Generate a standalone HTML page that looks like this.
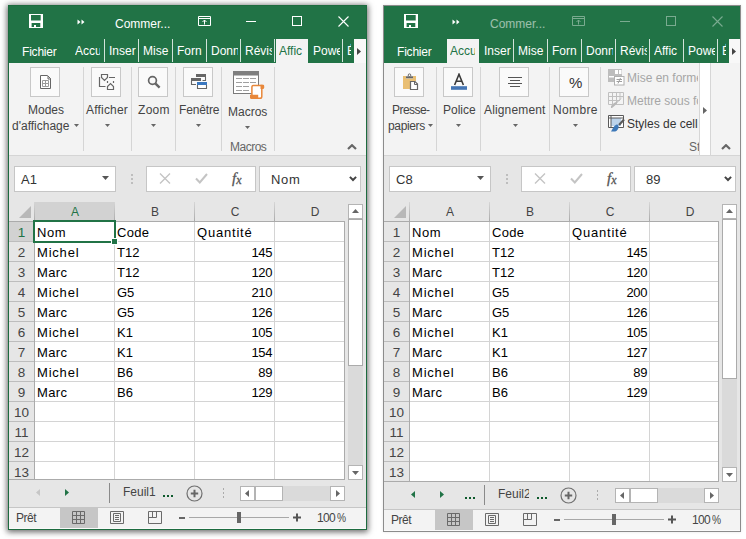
<!DOCTYPE html>
<html><head><meta charset="utf-8"><style>
*{margin:0;padding:0}
html,body{width:746px;height:539px;overflow:hidden;background:#fff;font-family:"Liberation Sans",sans-serif}
.win{position:absolute;box-sizing:border-box;border:1px solid;background:#e6e6e6;overflow:hidden}
.win div,.win svg{position:absolute}
.tb div.ttl{position:absolute}
.ttl{font-size:12px;color:#fff;white-space:nowrap;line-height:14px}
.inactive{opacity:.55}
.inactive.btns{opacity:.4}
.tab{font-size:12px;color:#fff;white-space:nowrap;overflow:hidden;line-height:16px}
.box{background:#fff;border:1px solid #c6c6c6;box-sizing:border-box}
.fb{font-size:13px;color:#333;line-height:16px}
.fx{font:italic 15px "Liberation Serif",serif;color:#555;line-height:18px;-webkit-text-stroke:.3px #555}
.ch{font-size:12px;text-align:center;line-height:16px}
.rh{font-size:13.5px;text-align:center;line-height:16px}
.cell{font-size:13px;color:#000;line-height:16px;white-space:nowrap}
.num{text-align:right;letter-spacing:-.4px}
.sbtn{background:#fff;border:1px solid #b4b4b4;box-sizing:border-box}
.rbox{background:#fafafa;border:1px solid #c8c8c8;box-sizing:border-box}
.rl{font-size:12px;color:#444;white-space:nowrap;line-height:16px}
.sh{font-size:12px;color:#444;white-space:nowrap;overflow:hidden;line-height:16px}
.st{font-size:12px;color:#444;line-height:16px}
</style></head><body>
<div class="win" style="left:8px;top:5px;width:359px;height:525px;border-color:#1d6b3f;box-shadow:0 1px 6px 1px rgba(0,0,0,.6);">
<div style="left:0px;top:0px;width:357px;height:57px;background:#217346"></div>
<div style="left:0px;top:0px;width:357px;height:33px;">
<svg style="left:20px;top:8px;width:14px;height:14px;" viewBox="0 0 14 14"><path fill="#fff" fill-rule="evenodd" d="M0 0H14V14H0Z M2 1H11.7V6.6H2Z M2.6 9H11.3V13H7V11H5V13H2.6Z"/></svg>
<svg style="left:68px;top:13px;width:9px;height:6px;" viewBox="0 0 9 6"><path d="M0.5 0.5L3.5 3L0.5 5.5Z M4.5 0.5L7.5 3L4.5 5.5Z" fill="#fff"/></svg>
<div class="ttl" style="left:106px;top:11px">Commer...</div>
<div class=" btns" style="left:0;top:0;width:357px;height:33px">
<svg style="left:189px;top:10px;width:13px;height:10px;" viewBox="0 0 13 10"><path d="M0.5 0.5H12.5V9.5H0.5Z M0.5 2.5H12.5 M6.5 8.5V4 M4.5 6L6.5 4L8.5 6" fill="none" stroke="#fff" stroke-width="1"/></svg>
<div style="left:237px;top:15px;width:10px;height:1px;background:#fff"></div>
<div style="left:283px;top:10px;width:10px;height:10px;border:1px solid #fff;box-sizing:border-box"></div>
<svg style="left:329px;top:10px;width:11px;height:11px;" viewBox="0 0 11 11"><path d="M0.5 0.5L10.5 10.5M10.5 0.5L0.5 10.5" stroke="#fff" stroke-width="1.1"/></svg>
</div></div>
<div class="tab" style="left:13px;top:38px;letter-spacing:-.2px">Fichier</div>
<div class="tab" style="left:66px;top:37px;width:25px;color:#fff">Accu</div>
<div class="tab" style="left:100px;top:37px;width:27px;color:#fff">Inser</div>
<div class="tab" style="left:134px;top:37px;width:27px;color:#fff">Mise</div>
<div class="tab" style="left:168px;top:37px;width:27px;color:#fff">Forn</div>
<div class="tab" style="left:202px;top:37px;width:27px;color:#fff">Donn</div>
<div class="tab" style="left:236px;top:37px;width:27px;color:#fff">Révis</div>
<div style="left:267px;top:33px;width:32px;height:24px;background:#f3f3f3"></div>
<div class="tab" style="left:270px;top:37px;width:27px;color:#217346">Affic</div>
<div class="tab" style="left:304px;top:37px;width:27px;color:#fff">Powe</div>
<div class="tab" style="left:338px;top:37px;width:4px;color:#fff">É</div>
<div style="left:95px;top:33px;width:1px;height:23px;background:rgba(255,255,255,.8)"></div>
<div style="left:129px;top:33px;width:1px;height:23px;background:rgba(255,255,255,.8)"></div>
<div style="left:163px;top:33px;width:1px;height:23px;background:rgba(255,255,255,.8)"></div>
<div style="left:197px;top:33px;width:1px;height:23px;background:rgba(255,255,255,.8)"></div>
<div style="left:231px;top:33px;width:1px;height:23px;background:rgba(255,255,255,.8)"></div>
<div style="left:265px;top:33px;width:1px;height:23px;background:rgba(255,255,255,.8)"></div>
<div style="left:333px;top:33px;width:1px;height:23px;background:rgba(255,255,255,.8)"></div>
<div style="left:345px;top:33px;width:12px;height:24px;background:#f8f8f8"></div>
<svg style="left:348px;top:42px;width:4px;height:7px;" viewBox="0 0 4 7"><path d="M0 0L4 3.5L0 7Z" fill="#444"/></svg>
<div style="left:0px;top:57px;width:357px;height:92px;background:#f3f3f3"></div>
<div style="left:0px;top:149px;width:357px;height:1px;background:#d5d5d5"></div>
<div class="rbox" style="left:21px;top:61px;width:30px;height:30px;"></div>
<div class="rbox" style="left:82px;top:61px;width:30px;height:30px;"></div>
<div class="rbox" style="left:129px;top:61px;width:30px;height:30px;"></div>
<div class="rbox" style="left:174px;top:61px;width:30px;height:30px;"></div>
<div style="left:74px;top:61px;width:1px;height:84px;background:#d5d5d5"></div>
<div style="left:122px;top:61px;width:1px;height:84px;background:#d5d5d5"></div>
<div style="left:166px;top:61px;width:1px;height:84px;background:#d5d5d5"></div>
<div style="left:212px;top:61px;width:1px;height:84px;background:#d5d5d5"></div>
<div style="left:265px;top:61px;width:1px;height:84px;background:#d5d5d5"></div>
<div class="rl" style="left:19px;top:96px;">Modes</div>
<div class="rl" style="left:3px;top:112px;">d'affichage</div>
<svg style="left:65px;top:118px;width:5px;height:3px;" viewBox="0 0 5 3"><path d="M0 0H5L2.5 3Z" fill="#666"/></svg>
<div class="rl" style="left:77px;top:96px;letter-spacing:.2px">Afficher</div>
<svg style="left:96px;top:118px;width:5px;height:3px;" viewBox="0 0 5 3"><path d="M0 0H5L2.5 3Z" fill="#666"/></svg>
<div class="rl" style="left:129px;top:96px;letter-spacing:.3px">Zoom</div>
<svg style="left:142px;top:118px;width:5px;height:3px;" viewBox="0 0 5 3"><path d="M0 0H5L2.5 3Z" fill="#666"/></svg>
<div class="rl" style="left:170px;top:96px;letter-spacing:-.15px">Fenêtre</div>
<svg style="left:187px;top:118px;width:5px;height:3px;" viewBox="0 0 5 3"><path d="M0 0H5L2.5 3Z" fill="#666"/></svg>
<div class="rl" style="left:219px;top:98px;">Macros</div>
<svg style="left:236px;top:120px;width:5px;height:3px;" viewBox="0 0 5 3"><path d="M0 0H5L2.5 3Z" fill="#666"/></svg>
<div class="rl" style="left:221px;top:133px;color:#666;letter-spacing:-.5px">Macros</div>
<svg style="left:338px;top:138px;width:10px;height:6px;" viewBox="0 0 10 6"><path d="M1 5L5 1.2L9 5" fill="none" stroke="#666" stroke-width="2.2"/></svg>
<svg style="left:30px;top:69px;width:13px;height:15px;" viewBox="0 0 13 15"><path d="M1.5 0.5H8.5L11.5 3.5V13.5H1.5Z" fill="#fff" stroke="#666" stroke-width="1"/><path d="M9 1V4H12" fill="none" stroke="#666"/><path d="M3.5 5.5H9.5V11.5H3.5Z M6.5 5.5V11.5 M3.5 8.5H9.5" fill="none" stroke="#9a9a9a" stroke-width="1"/></svg>
<svg style="left:86px;top:64px;width:22px;height:22px;" viewBox="0 0 22 22"><path d="M4.5 7V16.5H10.5 M6.5 4.5H12.5V7.5L9.5 10.5L6.5 7.5Z M14 7.5H20 M12.5 11V13 M18.5 11V13 M12.5 19.5V16.5L15.5 13.5L18.5 16.5V19.5Z" fill="none" stroke="#666" stroke-width="1.2"/></svg>
<svg style="left:138px;top:69px;width:14px;height:14px;" viewBox="0 0 14 14"><circle cx="5.5" cy="5.5" r="3.9" fill="none" stroke="#666" stroke-width="1.7"/><path d="M8.3 8.3L12.6 12.6" stroke="#666" stroke-width="2.4"/></svg>
<svg style="left:181px;top:67px;width:18px;height:17px;" viewBox="0 0 18 17"><rect x="6" y="1" width="10" height="3" fill="#666"/><path d="M15.5 4V7.5H12.5" fill="none" stroke="#666" stroke-width="1.1"/><rect x="1" y="5" width="10" height="3" fill="#666"/><path d="M1.5 8V11.5H6" fill="none" stroke="#666" stroke-width="1.1"/><rect x="7" y="9" width="10" height="3" fill="#3b78c0"/><path d="M7.5 12V15.5H16.5V12" fill="#fff" stroke="#666" stroke-width="1.1"/></svg>
<svg style="left:223px;top:64px;width:34px;height:30px;" viewBox="0 0 34 30"><rect x="1.5" y="1.5" width="25" height="22" fill="#fff" stroke="#7a7a7a"/><rect x="1" y="1" width="26" height="4.5" fill="#7f7f7f"/><path d="M4 8.5H10M11 8.5H17M18 8.5H24M4 12.5H10M11 12.5H17M18 12.5H24M4 16.5H10M11 16.5H17M4 20.5H10M11 20.5H17" stroke="#a0a0a0" stroke-width="1"/><path d="M21.2 15.5H29.8V26.5Q29.8 28.3 28 28.3H19.9V17.5Q19.9 15.5 21.2 15.5Z" fill="#fff" stroke="#e8873a" stroke-width="1.5"/><path d="M28.5 14.8H31.2Q32.2 14.8 32.2 16V17.5Q32.2 19 30.8 19H28.5Z" fill="#e8873a"/><path d="M18 24.8H26.2V29H19.5Q18 29 18 27.5Z" fill="#e8873a"/></svg>
<div style="left:0px;top:150px;width:357px;height:373px;background:#e6e6e6"></div>
<div class="box" style="left:5px;top:160px;width:102px;height:26px;"></div>
<div class="fb" style="left:12px;top:166px;">A1</div>
<svg style="left:93px;top:170px;width:7px;height:4px;" viewBox="0 0 7 4"><path d="M0 0H7L3.5 4Z" fill="#555"/></svg>
<div style="left:122px;top:168px;width:2px;height:2px;background:#b0b0b0;border-radius:1px"></div>
<div style="left:122px;top:172px;width:2px;height:2px;background:#b0b0b0;border-radius:1px"></div>
<div style="left:122px;top:176px;width:2px;height:2px;background:#b0b0b0;border-radius:1px"></div>
<div class="box" style="left:137px;top:160px;width:110px;height:26px;"></div>
<svg style="left:150px;top:167px;width:12px;height:11px;" viewBox="0 0 12 11"><path d="M1 0.5L11 10.5M11 0.5L1 10.5" stroke="#c4c4c4" stroke-width="1.4"/></svg>
<svg style="left:186px;top:167px;width:13px;height:11px;" viewBox="0 0 13 11"><path d="M1 5.5L4.8 9.5L12 1" fill="none" stroke="#c4c4c4" stroke-width="2"/></svg>
<div class="fx" style="left:223px;top:163px;">f<span style="font-size:12px;position:relative;top:1px;left:0px">x</span></div>
<div class="box" style="left:250px;top:160px;width:102px;height:26px;"></div>
<div class="fb" style="left:262px;top:166px;letter-spacing:0.7px">Nom</div>
<svg style="left:340px;top:170px;width:8px;height:6px;" viewBox="0 0 8 6"><path d="M0.9 0.9L4 4L7.1 0.9" fill="none" stroke="#444" stroke-width="2"/></svg>
<svg style="left:10px;top:200px;width:12px;height:12px;" viewBox="0 0 12 12"><path d="M12 0V12H0Z" fill="#b8b8b8"/></svg>
<div style="left:26px;top:216px;width:309px;height:257px;background:#fff"></div>
<div style="left:26px;top:196px;width:80px;height:19px;background:#d2d2d2"></div>
<div style="left:0px;top:216px;width:25px;height:20px;background:#d2d2d2"></div>
<div style="left:0px;top:215px;width:336px;height:1px;background:#ababab"></div>
<div style="left:25px;top:196px;width:1px;height:19px;background:linear-gradient(#d6d6d6,#ababab)"></div>
<div style="left:105px;top:196px;width:1px;height:19px;background:linear-gradient(#d6d6d6,#ababab)"></div>
<div style="left:185px;top:196px;width:1px;height:19px;background:linear-gradient(#d6d6d6,#ababab)"></div>
<div style="left:265px;top:196px;width:1px;height:19px;background:linear-gradient(#d6d6d6,#ababab)"></div>
<div class="ch" style="left:26px;top:198px;width:80px;color:#217346">A</div>
<div class="ch" style="left:106px;top:198px;width:80px;color:#444">B</div>
<div class="ch" style="left:186px;top:198px;width:80px;color:#444">C</div>
<div class="ch" style="left:266px;top:198px;width:80px;color:#444">D</div>
<div style="left:105px;top:216px;width:1px;height:257px;background:#d4d4d4"></div>
<div style="left:185px;top:216px;width:1px;height:257px;background:#d4d4d4"></div>
<div style="left:265px;top:216px;width:1px;height:257px;background:#d4d4d4"></div>
<div style="left:26px;top:235px;width:309px;height:1px;background:#d4d4d4"></div>
<div style="left:0px;top:235px;width:26px;height:1px;background:#bdbdbd"></div>
<div class="rh" style="left:0px;top:219px;width:25px;color:#217346">1</div>
<div style="left:26px;top:255px;width:309px;height:1px;background:#d4d4d4"></div>
<div style="left:0px;top:255px;width:26px;height:1px;background:#bdbdbd"></div>
<div class="rh" style="left:0px;top:239px;width:25px;color:#444">2</div>
<div style="left:26px;top:275px;width:309px;height:1px;background:#d4d4d4"></div>
<div style="left:0px;top:275px;width:26px;height:1px;background:#bdbdbd"></div>
<div class="rh" style="left:0px;top:259px;width:25px;color:#444">3</div>
<div style="left:26px;top:295px;width:309px;height:1px;background:#d4d4d4"></div>
<div style="left:0px;top:295px;width:26px;height:1px;background:#bdbdbd"></div>
<div class="rh" style="left:0px;top:279px;width:25px;color:#444">4</div>
<div style="left:26px;top:315px;width:309px;height:1px;background:#d4d4d4"></div>
<div style="left:0px;top:315px;width:26px;height:1px;background:#bdbdbd"></div>
<div class="rh" style="left:0px;top:299px;width:25px;color:#444">5</div>
<div style="left:26px;top:335px;width:309px;height:1px;background:#d4d4d4"></div>
<div style="left:0px;top:335px;width:26px;height:1px;background:#bdbdbd"></div>
<div class="rh" style="left:0px;top:319px;width:25px;color:#444">6</div>
<div style="left:26px;top:355px;width:309px;height:1px;background:#d4d4d4"></div>
<div style="left:0px;top:355px;width:26px;height:1px;background:#bdbdbd"></div>
<div class="rh" style="left:0px;top:339px;width:25px;color:#444">7</div>
<div style="left:26px;top:375px;width:309px;height:1px;background:#d4d4d4"></div>
<div style="left:0px;top:375px;width:26px;height:1px;background:#bdbdbd"></div>
<div class="rh" style="left:0px;top:359px;width:25px;color:#444">8</div>
<div style="left:26px;top:395px;width:309px;height:1px;background:#d4d4d4"></div>
<div style="left:0px;top:395px;width:26px;height:1px;background:#bdbdbd"></div>
<div class="rh" style="left:0px;top:379px;width:25px;color:#444">9</div>
<div style="left:26px;top:415px;width:309px;height:1px;background:#d4d4d4"></div>
<div style="left:0px;top:415px;width:26px;height:1px;background:#bdbdbd"></div>
<div class="rh" style="left:0px;top:399px;width:25px;color:#444">10</div>
<div style="left:26px;top:435px;width:309px;height:1px;background:#d4d4d4"></div>
<div style="left:0px;top:435px;width:26px;height:1px;background:#bdbdbd"></div>
<div class="rh" style="left:0px;top:419px;width:25px;color:#444">11</div>
<div style="left:26px;top:455px;width:309px;height:1px;background:#d4d4d4"></div>
<div style="left:0px;top:455px;width:26px;height:1px;background:#bdbdbd"></div>
<div class="rh" style="left:0px;top:439px;width:25px;color:#444">12</div>
<div class="rh" style="left:0px;top:459px;width:25px;color:#444">13</div>
<div style="left:25px;top:215px;width:1px;height:258px;background:#ababab"></div>
<div class="cell" style="left:28px;top:219px;letter-spacing:0.6px">Nom</div>
<div class="cell" style="left:108px;top:219px;letter-spacing:0.3px">Code</div>
<div class="cell" style="left:188px;top:219px;letter-spacing:0.8px">Quantité</div>
<div class="cell" style="left:28px;top:239px;letter-spacing:0.8px">Michel</div>
<div class="cell" style="left:108px;top:239px;letter-spacing:0px">T12</div>
<div class="cell num" style="left:186px;top:239px;width:77px">145</div>
<div class="cell" style="left:28px;top:259px;letter-spacing:0.4px">Marc</div>
<div class="cell" style="left:108px;top:259px;letter-spacing:0px">T12</div>
<div class="cell num" style="left:186px;top:259px;width:77px">120</div>
<div class="cell" style="left:28px;top:279px;letter-spacing:0.8px">Michel</div>
<div class="cell" style="left:108px;top:279px;letter-spacing:0px">G5</div>
<div class="cell num" style="left:186px;top:279px;width:77px">210</div>
<div class="cell" style="left:28px;top:299px;letter-spacing:0.4px">Marc</div>
<div class="cell" style="left:108px;top:299px;letter-spacing:0px">G5</div>
<div class="cell num" style="left:186px;top:299px;width:77px">126</div>
<div class="cell" style="left:28px;top:319px;letter-spacing:0.8px">Michel</div>
<div class="cell" style="left:108px;top:319px;letter-spacing:0px">K1</div>
<div class="cell num" style="left:186px;top:319px;width:77px">105</div>
<div class="cell" style="left:28px;top:339px;letter-spacing:0.4px">Marc</div>
<div class="cell" style="left:108px;top:339px;letter-spacing:0px">K1</div>
<div class="cell num" style="left:186px;top:339px;width:77px">154</div>
<div class="cell" style="left:28px;top:359px;letter-spacing:0.8px">Michel</div>
<div class="cell" style="left:108px;top:359px;letter-spacing:0px">B6</div>
<div class="cell num" style="left:186px;top:359px;width:77px">89</div>
<div class="cell" style="left:28px;top:379px;letter-spacing:0.4px">Marc</div>
<div class="cell" style="left:108px;top:379px;letter-spacing:0px">B6</div>
<div class="cell num" style="left:186px;top:379px;width:77px">129</div>
<div style="left:24px;top:214px;width:83px;height:23px;border:2px solid #217346;box-sizing:border-box"></div>
<div style="left:102px;top:232px;width:7px;height:7px;background:#fff"></div>
<div style="left:103px;top:233px;width:5px;height:5px;background:#217346"></div>
<div style="left:335px;top:215px;width:1px;height:259px;background:#ababab"></div>
<div style="left:0px;top:473px;width:336px;height:1px;background:#ababab"></div>
<div class="sbtn" style="left:339px;top:198px;width:15px;height:15px;"></div>
<svg style="left:343px;top:203px;width:7px;height:4px;" viewBox="0 0 7 4"><path d="M0 4L3.5 0L7 4Z" fill="#666"/></svg>
<div class="sbtn" style="left:339px;top:213px;width:15px;height:147px;border-color:#ababab"></div>
<div style="left:339px;top:360px;width:15px;height:99px;background:#dadada"></div>
<div class="sbtn" style="left:339px;top:459px;width:15px;height:15px;"></div>
<svg style="left:343px;top:465px;width:7px;height:4px;" viewBox="0 0 7 4"><path d="M0 0L3.5 4L7 0Z" fill="#666"/></svg>
<svg style="left:27px;top:483px;width:4px;height:7px;" viewBox="0 0 4 7"><path d="M4 0L0 3.5L4 7Z" fill="#c6c6c6"/></svg>
<svg style="left:56px;top:483px;width:4px;height:7px;" viewBox="0 0 4 7"><path d="M0 0L4 3.5L0 7Z" fill="#217346"/></svg>
<div style="left:100px;top:477px;width:1px;height:20px;background:#8a8a8a"></div>
<div class="sh" style="left:114px;top:478px;">Feuil1</div>
<div style="left:154px;top:489px;width:2px;height:2px;background:#0d5a2c"></div><div style="left:158px;top:489px;width:2px;height:2px;background:#0d5a2c"></div><div style="left:162px;top:489px;width:2px;height:2px;background:#0d5a2c"></div>
<svg style="left:177px;top:479px;width:17px;height:17px;" viewBox="0 0 17 17"><circle cx="8.5" cy="8.5" r="7.5" fill="none" stroke="#707070" stroke-width="1.2"/><path d="M8.5 4.8V12.2M4.8 8.5H12.2" stroke="#666" stroke-width="2"/></svg>
<div style="left:214px;top:482px;width:1px;height:2px;background:#ababab"></div><div style="left:214px;top:486px;width:1px;height:2px;background:#ababab"></div><div style="left:214px;top:490px;width:1px;height:2px;background:#ababab"></div>
<div class="sbtn" style="left:231px;top:480px;width:15px;height:15px;"></div>
<svg style="left:236px;top:484px;width:4px;height:7px;" viewBox="0 0 4 7"><path d="M4 0L0 3.5L4 7Z" fill="#666"/></svg>
<div class="sbtn" style="left:246px;top:480px;width:28px;height:15px;"></div>
<div style="left:274px;top:480px;width:47px;height:15px;background:#dadada"></div>
<div class="sbtn" style="left:321px;top:480px;width:15px;height:15px;"></div>
<svg style="left:327px;top:484px;width:4px;height:7px;" viewBox="0 0 4 7"><path d="M0 0L4 3.5L0 7Z" fill="#666"/></svg>
<div style="left:0px;top:501px;width:357px;height:1px;background:#c6c6c6"></div>
<div style="left:0px;top:502px;width:357px;height:21px;background:#f3f3f3"></div>
<div style="left:0px;top:522px;width:357px;height:1px;background:#fafafa"></div>
<div class="st" style="left:7px;top:504px;letter-spacing:-.5px">Prêt</div>
<div style="left:51px;top:502px;width:38px;height:20px;background:#c6c6c6"></div>
<svg style="left:63px;top:505px;width:13px;height:13px;" viewBox="0 0 13 13"><path d="M0.5 0.5H12.5V12.5H0.5Z M0.5 4.5H12.5 M0.5 8.5H12.5 M4.5 0.5V12.5 M8.5 0.5V12.5" fill="none" stroke="#6a6a6a" stroke-width="1"/></svg>
<svg style="left:101px;top:505px;width:14px;height:13px;" viewBox="0 0 14 13"><path d="M0.5 0.5H13.5V12.5H0.5Z M3.5 2.5H10.5V10.5H3.5Z M5 4.5H9 M5 6.5H9 M5 8.5H9" fill="none" stroke="#6a6a6a" stroke-width="1"/></svg>
<svg style="left:139px;top:505px;width:14px;height:13px;" viewBox="0 0 14 13"><path d="M0.5 0.5H13.5V12.5H0.5Z M4.5 0.5V6.5 M8.5 0.5V6.5H0.5" fill="none" stroke="#6a6a6a" stroke-width="1"/></svg>
<div style="left:170px;top:511px;width:6px;height:2px;background:#666"></div>
<div style="left:180px;top:511px;width:100px;height:1px;background:#a8a8a8"></div>
<div style="left:228px;top:506px;width:4px;height:11px;background:#666"></div>
<svg style="left:284px;top:507px;width:9px;height:9px;" viewBox="0 0 9 9"><path d="M0 4.5H8M4 0.5V8.5" stroke="#555" stroke-width="2"/></svg>
<div class="st" style="left:308px;top:504px;color:#444;letter-spacing:-.7px">100</div><div class="st" style="left:328px;top:504px;color:#444;transform:scaleX(.85);transform-origin:0 0">%</div>
</div>
<div class="win" style="left:383px;top:5px;width:358px;height:527px;border-color:#8c8c8c;box-shadow:0 0 3px rgba(0,0,0,.10);">
<div style="left:0px;top:0px;width:356px;height:57px;background:#217346"></div>
<div style="left:0px;top:0px;width:356px;height:33px;">
<svg style="left:20px;top:8px;width:14px;height:14px;" viewBox="0 0 14 14"><path fill="#fff" fill-rule="evenodd" d="M0 0H14V14H0Z M2 1H11.7V6.6H2Z M2.6 9H11.3V13H7V11H5V13H2.6Z"/></svg>
<svg style="left:68px;top:13px;width:9px;height:6px;" viewBox="0 0 9 6"><path d="M0.5 0.5L3.5 3L0.5 5.5Z M4.5 0.5L7.5 3L4.5 5.5Z" fill="#fff"/></svg>
<div class="ttl inactive" style="left:106px;top:11px">Commer...</div>
<div class=" inactive btns" style="left:0;top:0;width:356px;height:33px">
<svg style="left:188px;top:10px;width:13px;height:10px;" viewBox="0 0 13 10"><path d="M0.5 0.5H12.5V9.5H0.5Z M0.5 2.5H12.5 M6.5 8.5V4 M4.5 6L6.5 4L8.5 6" fill="none" stroke="#fff" stroke-width="1"/></svg>
<div style="left:236px;top:15px;width:10px;height:1px;background:#fff"></div>
<div style="left:282px;top:10px;width:10px;height:10px;border:1px solid #fff;box-sizing:border-box"></div>
<svg style="left:328px;top:10px;width:11px;height:11px;" viewBox="0 0 11 11"><path d="M0.5 0.5L10.5 10.5M10.5 0.5L0.5 10.5" stroke="#fff" stroke-width="1.1"/></svg>
</div></div>
<div class="tab" style="left:13px;top:38px;letter-spacing:-.2px">Fichier</div>
<div style="left:63px;top:33px;width:32px;height:24px;background:#f3f3f3"></div>
<div class="tab" style="left:66px;top:37px;width:25px;color:#217346">Accu</div>
<div class="tab" style="left:100px;top:37px;width:27px;color:#fff">Inser</div>
<div class="tab" style="left:134px;top:37px;width:27px;color:#fff">Mise</div>
<div class="tab" style="left:168px;top:37px;width:27px;color:#fff">Forn</div>
<div class="tab" style="left:202px;top:37px;width:27px;color:#fff">Donn</div>
<div class="tab" style="left:236px;top:37px;width:27px;color:#fff">Révis</div>
<div class="tab" style="left:270px;top:37px;width:27px;color:#fff">Affic</div>
<div class="tab" style="left:304px;top:37px;width:27px;color:#fff">Powe</div>
<div class="tab" style="left:338px;top:37px;width:4px;color:#fff">É</div>
<div style="left:129px;top:33px;width:1px;height:23px;background:rgba(255,255,255,.8)"></div>
<div style="left:163px;top:33px;width:1px;height:23px;background:rgba(255,255,255,.8)"></div>
<div style="left:197px;top:33px;width:1px;height:23px;background:rgba(255,255,255,.8)"></div>
<div style="left:231px;top:33px;width:1px;height:23px;background:rgba(255,255,255,.8)"></div>
<div style="left:265px;top:33px;width:1px;height:23px;background:rgba(255,255,255,.8)"></div>
<div style="left:299px;top:33px;width:1px;height:23px;background:rgba(255,255,255,.8)"></div>
<div style="left:333px;top:33px;width:1px;height:23px;background:rgba(255,255,255,.8)"></div>
<div style="left:345px;top:33px;width:11px;height:24px;background:#f8f8f8"></div>
<svg style="left:348px;top:42px;width:4px;height:7px;" viewBox="0 0 4 7"><path d="M0 0L4 3.5L0 7Z" fill="#444"/></svg>
<div style="left:0px;top:57px;width:356px;height:92px;background:#f3f3f3"></div>
<div style="left:0px;top:149px;width:356px;height:1px;background:#d5d5d5"></div>
<div class="rbox" style="left:10px;top:61px;width:30px;height:30px;"></div>
<div class="rbox" style="left:59px;top:61px;width:30px;height:30px;"></div>
<div class="rbox" style="left:115px;top:61px;width:30px;height:30px;"></div>
<div class="rbox" style="left:175px;top:61px;width:30px;height:30px;"></div>
<div style="left:52px;top:61px;width:1px;height:84px;background:#d5d5d5"></div>
<div style="left:96px;top:61px;width:1px;height:84px;background:#d5d5d5"></div>
<div style="left:165px;top:61px;width:1px;height:84px;background:#d5d5d5"></div>
<div style="left:216px;top:61px;width:1px;height:84px;background:#d5d5d5"></div>
<div class="rl" style="left:8px;top:96px;letter-spacing:-.55px">Presse-</div>
<div class="rl" style="left:4px;top:112px;letter-spacing:-.35px">papiers</div>
<svg style="left:44px;top:118px;width:5px;height:3px;" viewBox="0 0 5 3"><path d="M0 0H5L2.5 3Z" fill="#666"/></svg>
<div class="rl" style="left:59px;top:96px;">Police</div>
<svg style="left:72px;top:118px;width:5px;height:3px;" viewBox="0 0 5 3"><path d="M0 0H5L2.5 3Z" fill="#666"/></svg>
<div class="rl" style="left:100px;top:96px;letter-spacing:.15px">Alignement</div>
<svg style="left:129px;top:118px;width:5px;height:3px;" viewBox="0 0 5 3"><path d="M0 0H5L2.5 3Z" fill="#666"/></svg>
<div class="rl" style="left:169px;top:96px;letter-spacing:.35px">Nombre</div>
<svg style="left:189px;top:118px;width:5px;height:3px;" viewBox="0 0 5 3"><path d="M0 0H5L2.5 3Z" fill="#666"/></svg>
<svg style="left:18px;top:67px;width:17px;height:18px;" viewBox="0 0 17 18"><path d="M1 3H4V5.5H11V3H14V8H8V16H1Z" fill="#e9bf74"/><rect x="4" y="3.3" width="7" height="2" fill="#666"/><circle cx="7.5" cy="2.2" r="1.3" fill="#fff" stroke="#666" stroke-width="1"/><path d="M8.5 8.5H13L15.5 11V16.5H8.5Z" fill="#fff" stroke="#666" stroke-width="1.2"/><path d="M12.5 8.5V11.5H15.5" fill="none" stroke="#666"/></svg>
<svg style="left:66px;top:67px;width:18px;height:18px;" viewBox="0 0 18 18"><path d="M4.6 12L9 1.3L13.4 12 M6.2 8.3H11.8" fill="none" stroke="#3a3a3a" stroke-width="1.6"/><rect x="1" y="13.2" width="16" height="3.6" fill="#4475b4"/></svg>
<svg style="left:122px;top:69px;width:18px;height:14px;" viewBox="0 0 18 14"><path d="M2 2.5H16M4 5.5H14M2 8.5H16M4 11.5H14" stroke="#555" stroke-width="1.1"/></svg>
<div style="position:absolute;left:185px;top:68px;font:15px 'Liberation Sans',sans-serif;color:#333;line-height:17px">%</div>
<svg style="left:224px;top:63px;width:17px;height:17px;" viewBox="0 0 17 17"><path d="M0 0H14V13H0Z" fill="#bdbdbd"/><path d="M7 1H10V5H7Z M11 1H13.5V5H11Z M1 7H6V8.5H1Z" fill="#fff"/><rect x="6.5" y="7.5" width="9.5" height="8.5" fill="#fff" stroke="#b0b0b0"/><path d="M8.5 10.5H14M8.5 12.5H14M12.5 9L10 14.5" stroke="#a0a0a0"/></svg>
<div class="rl" style="left:243px;top:64px;color:#a6a6a6;width:71px;overflow:hidden">Mise en forme</div>
<svg style="left:224px;top:86px;width:17px;height:17px;" viewBox="0 0 17 17"><path d="M0.5 0.5H15.5V12.5H0.5Z M0.5 4.5H15.5 M0.5 8.5H12 M4.5 0.5V12.5 M8.5 0.5V12.5 M12 0.5V8" fill="#f4f4f4" stroke="#c0c0c0"/><path d="M16 3.5L10 10L7 13.5L4 16H3V14L6 11L10 9Z" fill="#b8b8b8"/></svg>
<div class="rl" style="left:243px;top:87px;color:#a6a6a6;width:71px;overflow:hidden">Mettre sous forme</div>
<svg style="left:224px;top:109px;width:17px;height:17px;" viewBox="0 0 17 17"><path d="M0.5 0.5H15.5V12.5H0.5Z" fill="#fff" stroke="#5a5a5a"/><path d="M3 3H13V11H3Z" fill="#bcd3ea"/><path d="M0.5 3H15.5 M3 0.5V12.5" stroke="#5a5a5a" stroke-width="1"/><path d="M16 4.5L11 10" stroke="#5a5a5a" stroke-width="2.2"/><path d="M9.5 9.5C7 9.5 5.5 12 3 16.5H7C9.5 16 11 13 10.5 11Z" fill="#3d78b8"/></svg>
<div class="rl" style="left:243px;top:110px;color:#333;width:71px;overflow:hidden">Styles de cellules</div>
<div class="rl" style="left:305px;top:133px;color:#666">St</div>
<div style="left:315px;top:57px;width:12px;height:93px;background:#fff;border:1px solid #d6d6d6;border-top:none;box-sizing:border-box"></div>
<svg style="left:319px;top:101px;width:4px;height:7px;" viewBox="0 0 4 7"><path d="M0 0L4 3.5L0 7Z" fill="#666"/></svg>
<svg style="left:337px;top:138px;width:10px;height:6px;" viewBox="0 0 10 6"><path d="M1 5L5 1.2L9 5" fill="none" stroke="#666" stroke-width="2.2"/></svg>
<div style="left:0px;top:150px;width:356px;height:375px;background:#e6e6e6"></div>
<div class="box" style="left:5px;top:160px;width:102px;height:26px;"></div>
<div class="fb" style="left:12px;top:166px;">C8</div>
<svg style="left:93px;top:170px;width:7px;height:4px;" viewBox="0 0 7 4"><path d="M0 0H7L3.5 4Z" fill="#555"/></svg>
<div style="left:122px;top:168px;width:2px;height:2px;background:#b0b0b0;border-radius:1px"></div>
<div style="left:122px;top:172px;width:2px;height:2px;background:#b0b0b0;border-radius:1px"></div>
<div style="left:122px;top:176px;width:2px;height:2px;background:#b0b0b0;border-radius:1px"></div>
<div class="box" style="left:137px;top:160px;width:110px;height:26px;"></div>
<svg style="left:150px;top:167px;width:12px;height:11px;" viewBox="0 0 12 11"><path d="M1 0.5L11 10.5M11 0.5L1 10.5" stroke="#c4c4c4" stroke-width="1.4"/></svg>
<svg style="left:186px;top:167px;width:13px;height:11px;" viewBox="0 0 13 11"><path d="M1 5.5L4.8 9.5L12 1" fill="none" stroke="#c4c4c4" stroke-width="2"/></svg>
<div class="fx" style="left:223px;top:163px;">f<span style="font-size:12px;position:relative;top:1px;left:0px">x</span></div>
<div class="box" style="left:250px;top:160px;width:102px;height:26px;"></div>
<div class="fb" style="left:262px;top:166px;letter-spacing:0px">89</div>
<svg style="left:340px;top:170px;width:8px;height:6px;" viewBox="0 0 8 6"><path d="M0.9 0.9L4 4L7.1 0.9" fill="none" stroke="#444" stroke-width="2"/></svg>
<svg style="left:10px;top:200px;width:12px;height:12px;" viewBox="0 0 12 12"><path d="M12 0V12H0Z" fill="#b8b8b8"/></svg>
<div style="left:26px;top:216px;width:308px;height:259px;background:#fff"></div>
<div style="left:0px;top:215px;width:335px;height:1px;background:#ababab"></div>
<div style="left:25px;top:196px;width:1px;height:19px;background:linear-gradient(#d6d6d6,#ababab)"></div>
<div style="left:105px;top:196px;width:1px;height:19px;background:linear-gradient(#d6d6d6,#ababab)"></div>
<div style="left:185px;top:196px;width:1px;height:19px;background:linear-gradient(#d6d6d6,#ababab)"></div>
<div style="left:265px;top:196px;width:1px;height:19px;background:linear-gradient(#d6d6d6,#ababab)"></div>
<div class="ch" style="left:26px;top:198px;width:80px;color:#444">A</div>
<div class="ch" style="left:106px;top:198px;width:80px;color:#444">B</div>
<div class="ch" style="left:186px;top:198px;width:80px;color:#444">C</div>
<div class="ch" style="left:266px;top:198px;width:80px;color:#444">D</div>
<div style="left:105px;top:216px;width:1px;height:259px;background:#d4d4d4"></div>
<div style="left:185px;top:216px;width:1px;height:259px;background:#d4d4d4"></div>
<div style="left:265px;top:216px;width:1px;height:259px;background:#d4d4d4"></div>
<div style="left:26px;top:235px;width:308px;height:1px;background:#d4d4d4"></div>
<div style="left:0px;top:235px;width:26px;height:1px;background:#bdbdbd"></div>
<div class="rh" style="left:0px;top:219px;width:25px;color:#444">1</div>
<div style="left:26px;top:255px;width:308px;height:1px;background:#d4d4d4"></div>
<div style="left:0px;top:255px;width:26px;height:1px;background:#bdbdbd"></div>
<div class="rh" style="left:0px;top:239px;width:25px;color:#444">2</div>
<div style="left:26px;top:275px;width:308px;height:1px;background:#d4d4d4"></div>
<div style="left:0px;top:275px;width:26px;height:1px;background:#bdbdbd"></div>
<div class="rh" style="left:0px;top:259px;width:25px;color:#444">3</div>
<div style="left:26px;top:295px;width:308px;height:1px;background:#d4d4d4"></div>
<div style="left:0px;top:295px;width:26px;height:1px;background:#bdbdbd"></div>
<div class="rh" style="left:0px;top:279px;width:25px;color:#444">4</div>
<div style="left:26px;top:315px;width:308px;height:1px;background:#d4d4d4"></div>
<div style="left:0px;top:315px;width:26px;height:1px;background:#bdbdbd"></div>
<div class="rh" style="left:0px;top:299px;width:25px;color:#444">5</div>
<div style="left:26px;top:335px;width:308px;height:1px;background:#d4d4d4"></div>
<div style="left:0px;top:335px;width:26px;height:1px;background:#bdbdbd"></div>
<div class="rh" style="left:0px;top:319px;width:25px;color:#444">6</div>
<div style="left:26px;top:355px;width:308px;height:1px;background:#d4d4d4"></div>
<div style="left:0px;top:355px;width:26px;height:1px;background:#bdbdbd"></div>
<div class="rh" style="left:0px;top:339px;width:25px;color:#444">7</div>
<div style="left:26px;top:375px;width:308px;height:1px;background:#d4d4d4"></div>
<div style="left:0px;top:375px;width:26px;height:1px;background:#bdbdbd"></div>
<div class="rh" style="left:0px;top:359px;width:25px;color:#444">8</div>
<div style="left:26px;top:395px;width:308px;height:1px;background:#d4d4d4"></div>
<div style="left:0px;top:395px;width:26px;height:1px;background:#bdbdbd"></div>
<div class="rh" style="left:0px;top:379px;width:25px;color:#444">9</div>
<div style="left:26px;top:415px;width:308px;height:1px;background:#d4d4d4"></div>
<div style="left:0px;top:415px;width:26px;height:1px;background:#bdbdbd"></div>
<div class="rh" style="left:0px;top:399px;width:25px;color:#444">10</div>
<div style="left:26px;top:435px;width:308px;height:1px;background:#d4d4d4"></div>
<div style="left:0px;top:435px;width:26px;height:1px;background:#bdbdbd"></div>
<div class="rh" style="left:0px;top:419px;width:25px;color:#444">11</div>
<div style="left:26px;top:455px;width:308px;height:1px;background:#d4d4d4"></div>
<div style="left:0px;top:455px;width:26px;height:1px;background:#bdbdbd"></div>
<div class="rh" style="left:0px;top:439px;width:25px;color:#444">12</div>
<div class="rh" style="left:0px;top:459px;width:25px;color:#444">13</div>
<div style="left:25px;top:215px;width:1px;height:260px;background:#ababab"></div>
<div class="cell" style="left:28px;top:219px;letter-spacing:0.6px">Nom</div>
<div class="cell" style="left:108px;top:219px;letter-spacing:0.3px">Code</div>
<div class="cell" style="left:188px;top:219px;letter-spacing:0.8px">Quantité</div>
<div class="cell" style="left:28px;top:239px;letter-spacing:0.8px">Michel</div>
<div class="cell" style="left:108px;top:239px;letter-spacing:0px">T12</div>
<div class="cell num" style="left:186px;top:239px;width:77px">145</div>
<div class="cell" style="left:28px;top:259px;letter-spacing:0.4px">Marc</div>
<div class="cell" style="left:108px;top:259px;letter-spacing:0px">T12</div>
<div class="cell num" style="left:186px;top:259px;width:77px">120</div>
<div class="cell" style="left:28px;top:279px;letter-spacing:0.8px">Michel</div>
<div class="cell" style="left:108px;top:279px;letter-spacing:0px">G5</div>
<div class="cell num" style="left:186px;top:279px;width:77px">200</div>
<div class="cell" style="left:28px;top:299px;letter-spacing:0.4px">Marc</div>
<div class="cell" style="left:108px;top:299px;letter-spacing:0px">G5</div>
<div class="cell num" style="left:186px;top:299px;width:77px">126</div>
<div class="cell" style="left:28px;top:319px;letter-spacing:0.8px">Michel</div>
<div class="cell" style="left:108px;top:319px;letter-spacing:0px">K1</div>
<div class="cell num" style="left:186px;top:319px;width:77px">105</div>
<div class="cell" style="left:28px;top:339px;letter-spacing:0.4px">Marc</div>
<div class="cell" style="left:108px;top:339px;letter-spacing:0px">K1</div>
<div class="cell num" style="left:186px;top:339px;width:77px">127</div>
<div class="cell" style="left:28px;top:359px;letter-spacing:0.8px">Michel</div>
<div class="cell" style="left:108px;top:359px;letter-spacing:0px">B6</div>
<div class="cell num" style="left:186px;top:359px;width:77px">89</div>
<div class="cell" style="left:28px;top:379px;letter-spacing:0.4px">Marc</div>
<div class="cell" style="left:108px;top:379px;letter-spacing:0px">B6</div>
<div class="cell num" style="left:186px;top:379px;width:77px">129</div>
<div style="left:334px;top:215px;width:1px;height:261px;background:#ababab"></div>
<div style="left:0px;top:475px;width:335px;height:1px;background:#ababab"></div>
<div class="sbtn" style="left:338px;top:198px;width:15px;height:15px;"></div>
<svg style="left:342px;top:203px;width:7px;height:4px;" viewBox="0 0 7 4"><path d="M0 4L3.5 0L7 4Z" fill="#666"/></svg>
<div class="sbtn" style="left:338px;top:213px;width:15px;height:160px;border-color:#ababab"></div>
<div style="left:338px;top:373px;width:15px;height:88px;background:#dadada"></div>
<div class="sbtn" style="left:338px;top:461px;width:15px;height:15px;"></div>
<svg style="left:342px;top:467px;width:7px;height:4px;" viewBox="0 0 7 4"><path d="M0 0L3.5 4L7 0Z" fill="#666"/></svg>
<svg style="left:27px;top:485px;width:4px;height:7px;" viewBox="0 0 4 7"><path d="M4 0L0 3.5L4 7Z" fill="#217346"/></svg>
<svg style="left:56px;top:485px;width:4px;height:7px;" viewBox="0 0 4 7"><path d="M0 0L4 3.5L0 7Z" fill="#217346"/></svg>
<div style="left:81px;top:491px;width:2px;height:2px;background:#0d5a2c"></div><div style="left:85px;top:491px;width:2px;height:2px;background:#0d5a2c"></div><div style="left:89px;top:491px;width:2px;height:2px;background:#0d5a2c"></div>
<div style="left:100px;top:479px;width:1px;height:20px;background:#8a8a8a"></div>
<div class="sh" style="left:114px;top:480px;width:31px">Feuil2</div>
<div style="left:153px;top:491px;width:2px;height:2px;background:#0d5a2c"></div><div style="left:157px;top:491px;width:2px;height:2px;background:#0d5a2c"></div><div style="left:161px;top:491px;width:2px;height:2px;background:#0d5a2c"></div>
<svg style="left:176px;top:481px;width:17px;height:17px;" viewBox="0 0 17 17"><circle cx="8.5" cy="8.5" r="7.5" fill="none" stroke="#707070" stroke-width="1.2"/><path d="M8.5 4.8V12.2M4.8 8.5H12.2" stroke="#666" stroke-width="2"/></svg>
<div style="left:213px;top:484px;width:1px;height:2px;background:#ababab"></div><div style="left:213px;top:488px;width:1px;height:2px;background:#ababab"></div><div style="left:213px;top:492px;width:1px;height:2px;background:#ababab"></div>
<div class="sbtn" style="left:231px;top:482px;width:15px;height:15px;"></div>
<svg style="left:236px;top:486px;width:4px;height:7px;" viewBox="0 0 4 7"><path d="M4 0L0 3.5L4 7Z" fill="#666"/></svg>
<div class="sbtn" style="left:246px;top:482px;width:28px;height:15px;"></div>
<div style="left:274px;top:482px;width:46px;height:15px;background:#dadada"></div>
<div class="sbtn" style="left:320px;top:482px;width:15px;height:15px;"></div>
<svg style="left:326px;top:486px;width:4px;height:7px;" viewBox="0 0 4 7"><path d="M0 0L4 3.5L0 7Z" fill="#666"/></svg>
<div style="left:0px;top:503px;width:356px;height:1px;background:#c6c6c6"></div>
<div style="left:0px;top:504px;width:356px;height:21px;background:#f3f3f3"></div>
<div style="left:0px;top:524px;width:356px;height:1px;background:#fafafa"></div>
<div class="st" style="left:7px;top:506px;letter-spacing:-.5px">Prêt</div>
<div style="left:51px;top:504px;width:38px;height:20px;background:#c6c6c6"></div>
<svg style="left:63px;top:507px;width:13px;height:13px;" viewBox="0 0 13 13"><path d="M0.5 0.5H12.5V12.5H0.5Z M0.5 4.5H12.5 M0.5 8.5H12.5 M4.5 0.5V12.5 M8.5 0.5V12.5" fill="none" stroke="#6a6a6a" stroke-width="1"/></svg>
<svg style="left:101px;top:507px;width:14px;height:13px;" viewBox="0 0 14 13"><path d="M0.5 0.5H13.5V12.5H0.5Z M3.5 2.5H10.5V10.5H3.5Z M5 4.5H9 M5 6.5H9 M5 8.5H9" fill="none" stroke="#6a6a6a" stroke-width="1"/></svg>
<svg style="left:139px;top:507px;width:14px;height:13px;" viewBox="0 0 14 13"><path d="M0.5 0.5H13.5V12.5H0.5Z M4.5 0.5V6.5 M8.5 0.5V6.5H0.5" fill="none" stroke="#6a6a6a" stroke-width="1"/></svg>
<div style="left:170px;top:513px;width:6px;height:2px;background:#666"></div>
<div style="left:180px;top:513px;width:100px;height:1px;background:#a8a8a8"></div>
<div style="left:228px;top:508px;width:4px;height:11px;background:#666"></div>
<svg style="left:284px;top:509px;width:9px;height:9px;" viewBox="0 0 9 9"><path d="M0 4.5H8M4 0.5V8.5" stroke="#555" stroke-width="2"/></svg>
<div class="st" style="left:308px;top:506px;color:#444;letter-spacing:-.7px">100</div><div class="st" style="left:328px;top:506px;color:#444;transform:scaleX(.85);transform-origin:0 0">%</div>
</div>
</body></html>
